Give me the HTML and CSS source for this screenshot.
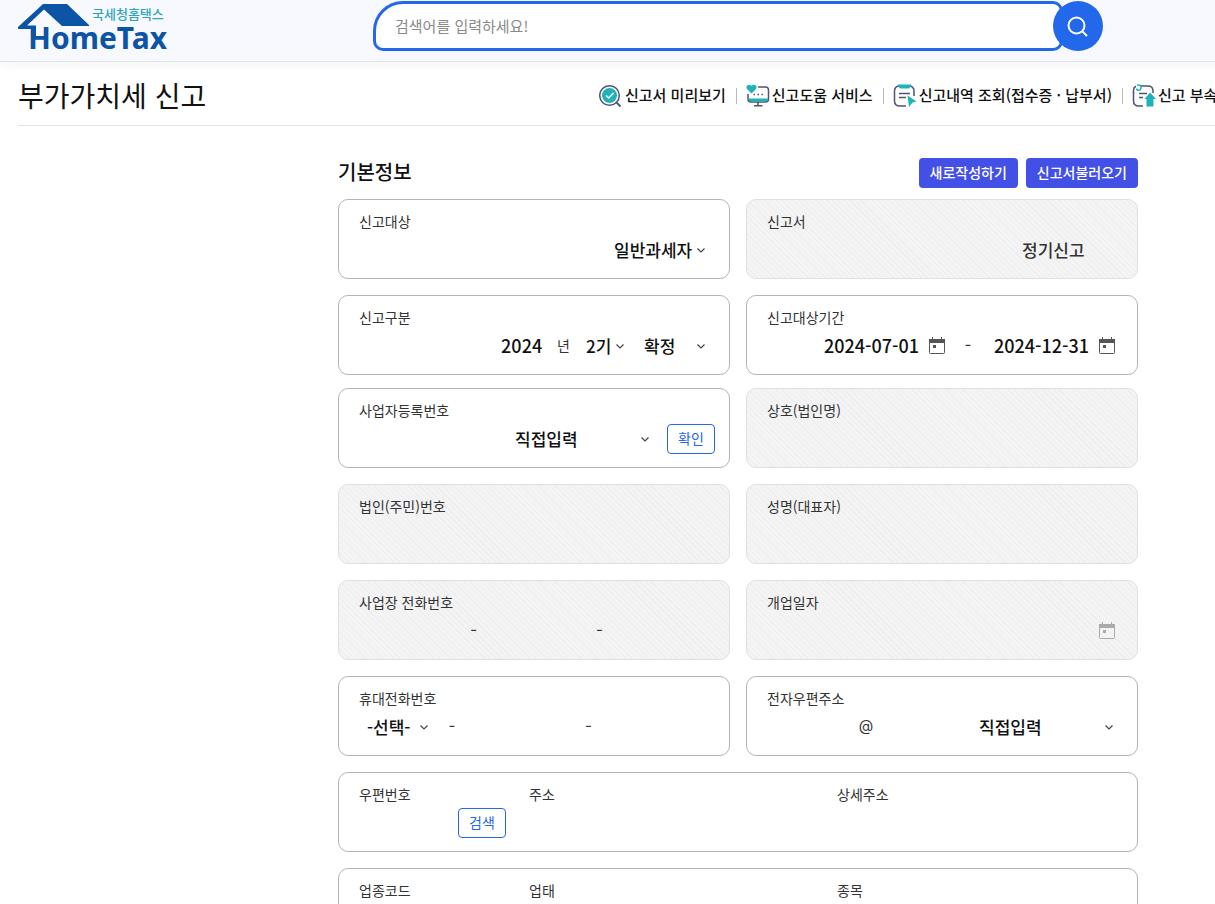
FILE: index.html
```html
<!DOCTYPE html>
<html lang="ko">
<head>
    <meta charset="UTF-8">
    <meta name="viewport" content="width=device-width, initial-scale=1.0">
    <title>부가가치세 신고</title>
    <link rel="stylesheet" href="styles.css">
</head>
<body>
<div class="page">

    <!-- Top bar -->
    <header class="top-bar">
        <a class="logo" href="#" aria-label="국세청홈택스 HomeTax">
            <svg width="152" height="52" viewBox="16 0 152 52">
                <path fill="#0c54a5" d="M18 27 43 4H67L89 25V26H62L44 9.500 27 25.500H36V36H31V29H18Z"/>
                <text class="logo-sub" x="92" y="19">국세청홈택스</text>
                <text class="logo-main" x="28" y="49">HomeTax</text>
            </svg>
        </a>
        <form class="search" role="search">
            <input class="search-input" type="text" placeholder="검색어를 입력하세요!" aria-label="검색어">
            <button class="search-button" type="button" aria-label="검색">
                <svg width="24" height="24" viewBox="0 0 24 24" fill="none" stroke="#fff" stroke-width="2">
                    <circle cx="10.500" cy="11.500" r="8"/>
                    <path d="M16.500 17.500 21 22"/>
                </svg>
            </button>
        </form>
    </header>

    <!-- Page title and tools -->
    <div class="title-bar">
        <h1>부가가치세 신고</h1>
        <nav class="tools">
            <a href="#">
                <svg width="24" height="24" viewBox="0 0 24 24" fill="none">
                    <circle cx="10.500" cy="11.500" r="9.800" stroke="#4d5570" stroke-width="1.500"/>
                    <path d="M17.500 18.500 21.500 22.500" stroke="#4d5570" stroke-width="1.800"/>
                    <circle cx="10.500" cy="11.500" r="7.500" fill="#1fb3b8"/>
                    <path d="M7 11.500 9.700 14 14.500 9" stroke="#fff" stroke-width="1.600"/>
                </svg>
                신고서 미리보기
            </a>
            <a href="#">
                <svg width="24" height="24" viewBox="0 0 24 24" fill="none">
                    <path d="M12 3H19.500Q22.500 3 22.500 6V15Q22.500 18 19.500 18H5Q2 18 2 15V10" stroke="#4d5570" stroke-width="1.500"/>
                    <path d="M2.500 14.500H22V15Q22 17.500 19.500 17.500H5.500Q2.500 17.500 2.500 15Z" fill="#1fb3b8"/>
                    <path d="M12 18V21.500M8 21.800H16.500" stroke="#4d5570" stroke-width="1.600"/>
                    <path d="M5.500 9.500 1 5C-1 2 2.500-1 5.500 1.700 8.500-1 12 2 10 5Z" fill="#1fb3b8"/>
                    <path d="M7.500 10.500h1.500M11.500 10.500h1.500M15.500 10.500h1.500" stroke="#4d5570" stroke-width="1.500"/>
                </svg>
                신고도움 서비스
            </a>
            <a href="#">
                <svg width="24" height="24" viewBox="0 0 24 24" fill="none">
                    <path d="M13 22H7Q1.500 22 1.500 17V7Q1.500 2 7 2H15.500Q21 2 21 7V12" stroke="#4d5570" stroke-width="1.500"/>
                    <path d="M5 0.500H18Q17.500 4.500 15 4.500H8Q5.500 4.500 5 .5Z" fill="#1fb3b8"/>
                    <path d="M6 9.500H17M6 13.500H13" stroke="#4d5570" stroke-width="1.500"/>
                    <path d="M14.500 11.500 23.500 17.500 19.500 18.500 16 23Z" fill="#1fb3b8"/>
                </svg>
                신고내역 조회(접수증 · 납부서)
            </a>
            <a href="#">
                <svg width="24" height="24" viewBox="0 0 24 24" fill="none">
                    <path d="M9 2H16Q21 2 21 7V9M1.500 8V17Q1.500 22 7 22H11" stroke="#4d5570" stroke-width="1.500"/>
                    <path d="M5 1.300C8 .5 9.300 2 9 4 8.500 7 4.500 7 4.700 4.500" stroke="#1fb3b8" stroke-width="1.600"/>
                    <path d="M1.500 9V6Q1.500 3.500 4 2.300M7 9.500H15M7 13.500H11" stroke="#4d5570" stroke-width="1.500"/>
                    <path d="M18 8.500 24 15H21.500V22.500H14.500V15H12.500Z" fill="#1fb3b8"/>
                </svg>
                신고 부속서류
            </a>
        </nav>
    </div>

    <!-- Basic information form -->
    <main class="content">
        <div class="section-head">
            <h2>기본정보</h2>
            <div class="actions">
                <button class="btn-fill" type="button">새로작성하기</button>
                <button class="btn-fill" type="button">신고서불러오기</button>
            </div>
        </div>

        <div class="cards">
            <div class="card">
                <label for="target">신고대상</label>
                <div class="row end">
                    <select id="target"><option>일반과세자</option></select>
                </div>
            </div>
            <div class="card off">
                <label for="report">신고서</label>
                <div class="row end">
                    <select id="report" class="report" disabled><option>정기신고</option></select>
                </div>
            </div>
            <div class="card">
                <label for="year">신고구분</label>
                <div class="row end">
                    <input id="year" class="year" type="text" value="2024">
                    <span class="unit">년</span>
                    <select class="term" aria-label="기수"><option>2기</option></select>
                    <select class="kind" aria-label="확정 구분"><option>확정</option></select>
                </div>
            </div>
            <div class="card">
                <label for="from">신고대상기간</label>
                <div class="row end">
                    <input id="from" class="date" type="text" value="2024-07-01">
                    <button class="cal" type="button" aria-label="시작일 선택">
                        <svg width="16" height="17" viewBox="0 0 16 17"><path fill="none" stroke="currentColor" d="M.5 3V15.500Q.5 16.500 1.500 16.500H14.500Q15.500 16.500 15.500 15.500V3"/><path fill="currentColor" d="M0 2H3V0H4V2H12V0H13V2H16V6H0ZM4 8H7V11H4Z"/></svg>
                    </button>
                    <span class="dash wide">-</span>
                    <input class="date" type="text" value="2024-12-31" aria-label="종료일">
                    <button class="cal" type="button" aria-label="종료일 선택">
                        <svg width="16" height="17" viewBox="0 0 16 17"><path fill="none" stroke="currentColor" d="M.5 3V15.500Q.5 16.500 1.500 16.500H14.500Q15.500 16.500 15.500 15.500V3"/><path fill="currentColor" d="M0 2H3V0H4V2H12V0H13V2H16V6H0ZM4 8H7V11H4Z"/></svg>
                    </button>
                </div>
            </div>
        </div>

        <div class="cards">
            <div class="card">
                <label for="bizno">사업자등록번호</label>
                <div class="row">
                    <input id="bizno" class="grow" type="text">
                    <select class="direct" aria-label="입력 방식"><option>직접입력</option></select>
                    <button class="btn-line" type="button">확인</button>
                </div>
            </div>
            <div class="card off">
                <label for="company">상호(법인명)</label>
                <div class="row"><input id="company" class="grow" type="text" disabled></div>
            </div>
            <div class="card off">
                <label for="corpno">법인(주민)번호</label>
                <div class="row"><input id="corpno" class="grow" type="text" disabled></div>
            </div>
            <div class="card off">
                <label for="owner">성명(대표자)</label>
                <div class="row"><input id="owner" class="grow" type="text" disabled></div>
            </div>
            <div class="card off">
                <label for="tel">사업장 전화번호</label>
                <div class="row">
                    <input id="tel" class="grow" type="text" disabled>
                    <span class="dash">-</span>
                    <input class="grow" type="text" aria-label="전화번호 가운데" disabled>
                    <span class="dash">-</span>
                    <input class="grow" type="text" aria-label="전화번호 끝" disabled>
                </div>
            </div>
            <div class="card off">
                <label for="opened">개업일자</label>
                <div class="row">
                    <input id="opened" class="grow" type="text" disabled>
                    <button class="cal" type="button" aria-label="개업일자 선택" disabled>
                        <svg width="16" height="17" viewBox="0 0 16 17"><path fill="none" stroke="currentColor" d="M.5 3V15.500Q.5 16.500 1.500 16.500H14.500Q15.500 16.500 15.500 15.500V3"/><path fill="currentColor" d="M0 2H3V0H4V2H12V0H13V2H16V6H0ZM4 8H7V11H4Z"/></svg>
                    </button>
                </div>
            </div>
            <div class="card">
                <label for="mobile">휴대전화번호</label>
                <div class="row">
                    <select id="mobile" class="prefix"><option>-선택-</option></select>
                    <span class="dash">-</span>
                    <input class="grow" type="text" aria-label="휴대전화 가운데">
                    <span class="dash">-</span>
                    <input class="grow" type="text" aria-label="휴대전화 끝">
                </div>
            </div>
            <div class="card">
                <label for="email">전자우편주소</label>
                <div class="row">
                    <input id="email" class="mail-id" type="text">
                    <span class="dash">@</span>
                    <input class="grow" type="text" aria-label="전자우편 도메인">
                    <select class="direct" aria-label="도메인 선택"><option>직접입력</option></select>
                </div>
            </div>

            <div class="card full">
                <div>
                    <label for="zip">우편번호</label>
                    <div class="row">
                        <input id="zip" class="zip" type="text">
                        <button class="btn-line" type="button">검색</button>
                    </div>
                </div>
                <div>
                    <label for="addr">주소</label>
                    <div class="row"><input id="addr" class="grow" type="text"></div>
                </div>
                <div>
                    <label for="addr2">상세주소</label>
                    <div class="row"><input id="addr2" class="grow" type="text"></div>
                </div>
            </div>
            <div class="card full">
                <div>
                    <label for="code">업종코드</label>
                    <div class="row"><input id="code" class="zip" type="text"></div>
                </div>
                <div>
                    <label for="type">업태</label>
                    <div class="row"><input id="type" class="grow" type="text"></div>
                </div>
                <div>
                    <label for="item">종목</label>
                    <div class="row"><input id="item" class="grow" type="text"></div>
                </div>
            </div>
        </div>
    </main>

</div>
</body>
</html>
```
FILE: styles.css
```css
/* General */
* {
    box-sizing: border-box;
}

body {
    margin: 0;
    overflow: hidden;
    background: #fff;
    color: #111;
    font-family: "Noto Sans CJK KR", sans-serif;
    font-size: 14px;
    line-height: 20px;
}

/* the desktop layout never gets narrower than this */
.page {
    min-width: 1476px;
}

a {
    color: inherit;
    text-decoration: none;
}

input, select, button {
    font-family: inherit;
    color: inherit;
    margin: 0;
    padding: 0;
    border: 0;
    background: none;
}

button {
    cursor: pointer;
}

/* Top bar */
.top-bar {
    display: grid;
    grid-template-columns: 1fr 730px 1fr;
    align-items: start;
    height: 62px;
    padding: 0 16px;
    background: #f8f9ff;
    border-bottom: 1px solid #dfe2ea;
    box-shadow: 0 2px 10px rgba(0, 0, 0, 0.05);
}

.logo svg {
    display: block;
}

.logo-sub {
    font-size: 13px;
    font-weight: 500;
    fill: #2ba5bd;
}

.logo-main {
    font-family: "Noto Sans", sans-serif;
    font-size: 30px;
    font-weight: 700;
    fill: #0c54a5;
}

.search {
    display: flex;
    padding-top: 1px;
}

.search-input {
    flex: 1;
    height: 50px;
    padding: 0 19px 2px;
    background: #fff;
    border: 3px solid #2367eb;
    border-radius: 30px 10px 10px 10px;
    font-size: 15px;
}

.search-input::placeholder {
    color: #8a8a8a;
}

.search-button {
    display: flex;
    align-items: center;
    justify-content: center;
    width: 50px;
    height: 50px;
    margin-left: -10px;
    border-radius: 50%;
    background: #2367eb;
}

/* Title bar */
.title-bar {
    display: grid;
    grid-template-columns: 581px 1fr;
    align-items: center;
    height: 64px;
    margin: 0 18px;
    padding-top: 3px;
    border-bottom: 1px solid #e3e3e3;
}

h1 {
    margin: 0;
    font-size: 28px;
    font-weight: 400;
    line-height: 40px;
}

.tools {
    display: flex;
    align-items: center;
    white-space: nowrap;
    font-size: 15px;
    font-weight: 500;
}

.tools a {
    display: flex;
    align-items: center;
    gap: 2px;
}

.tools svg {
    margin-top: 2px;
}

.tools a + a::before {
    content: "";
    width: 1px;
    height: 16px;
    margin: 2px 7px 0 10px;
    background: #bbb;
}

/* Form */
.content {
    width: 800px;
    margin: 32px auto 0;
}

.section-head, .actions {
    display: flex;
    justify-content: space-between;
    gap: 8px;
}

.section-head {
    margin-bottom: 11px;
}

h2 {
    margin: 0;
    font-size: 20px;
    font-weight: 500;
    line-height: 28px;
}

.btn-fill {
    height: 30px;
    padding: 0 11px 2px;
    border-radius: 4px;
    background: #4350e6;
    color: #fff;
    font-size: 14px;
    font-weight: 500;
}

.btn-line {
    width: 48px;
    height: 30px;
    padding-bottom: 2px;
    border: 1px solid #2367eb;
    border-radius: 4px;
    background: #fff;
    color: #2367eb;
    font-size: 14px;
}

.cards {
    display: grid;
    grid-template-columns: 1fr 1fr;
    gap: 16px;
    margin-bottom: 13px;
}

.card {
    padding: 11px 14px 13px 19px;
    border: 1px solid #b5b5b5;
    border-radius: 10px;
    background: #fff;
}

.card.off {
    border-color: #dfe0e6;
    background: repeating-linear-gradient(45deg, #f4f4f4 0 3px, #eeeef0 3px 4px);
}

.card.full {
    grid-column: 1 / 3;
    display: grid;
    grid-template-columns: 170px 308px 1fr;
}

label {
    display: block;
    margin-bottom: 4px;
    padding-left: 1px;
    color: #333;
}

.row {
    display: flex;
    align-items: center;
    height: 30px;
}

.row.end {
    justify-content: flex-end;
}

.row input, .row select {
    height: 30px;
    padding-bottom: 2px;
    font-size: 17px;
    font-weight: 500;
}

.row select {
    appearance: none;
    padding-right: 22px;
    background: url("data:image/svg+xml,%3Csvg xmlns='http://www.w3.org/2000/svg' width='8' height='5' fill='none' stroke='%23444' stroke-width='1.2'%3E%3Cpath d='M.5.5 4 4 7.500.5'/%3E%3C/svg%3E") no-repeat right 10px center;
}

.row select:disabled {
    background-image: none;
    color: #333;
    opacity: 1;
}

.row .grow {
    flex: 1;
    width: 0;
}

.row .year, .row .date {
    font-size: 18px;
}

.row .year {
    width: 56px;
}

.row .date {
    width: 99px;
}

.row .report {
    padding-right: 38px;
}

.row .term {
    margin: 0 10px 0 16px;
}

.row .kind {
    width: 71px;
}

.row .direct {
    width: 144px;
}

.row .direct + .btn-line {
    margin-left: 8px;
}

.row .prefix {
    width: 84px;
    padding-left: 9px;
    background-position: right 14px center;
}

.row .mail-id {
    width: 90px;
}

.row .zip {
    width: 100px;
}

.unit, .dash {
    padding-bottom: 2px;
    color: #333;
}

.dash {
    width: 20px;
    font-family: "Inter", sans-serif;
    font-size: 15px;
    text-align: center;
}

.dash.wide {
    width: 41px;
    padding-right: 11px;
}

.cal {
    display: flex;
    align-items: center;
    justify-content: flex-end;
    width: 30px;
    height: 30px;
    padding: 0 8px 2px 0;
    color: #555;
}

.cal:disabled {
    color: #aaa;
}
```
